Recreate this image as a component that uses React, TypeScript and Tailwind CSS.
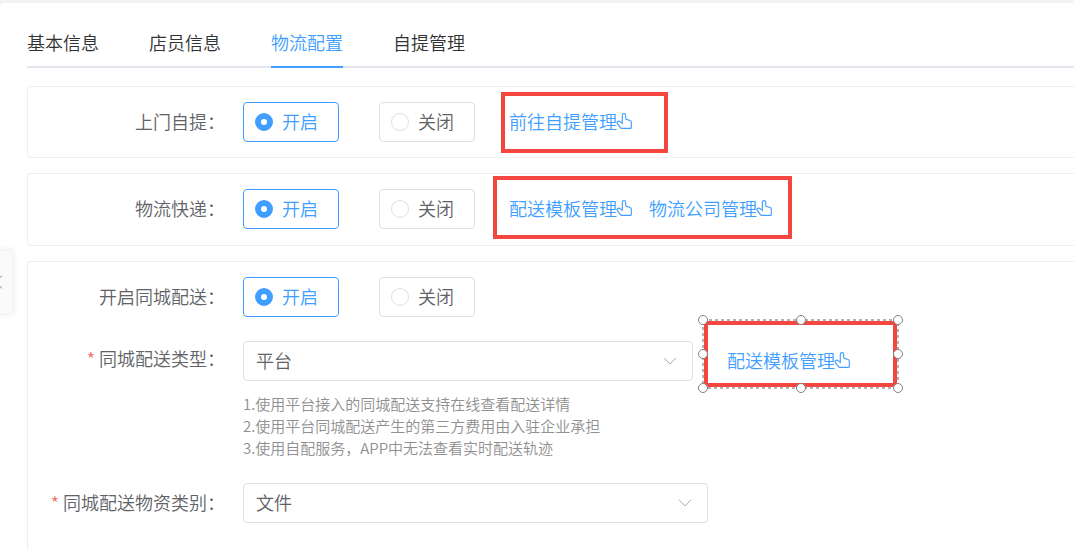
import { useState } from "react";
import type { ReactNode } from "react";

const TABS = ["基本信息", "店员信息", "物流配置", "自提管理"];

const TIPS = [
  "1.使用平台接入的同城配送支持在线查看配送详情",
  "2.使用平台同城配送产生的第三方费用由入驻企业承担",
  "3.使用自配服务，APP中无法查看实时配送轨迹",
];

function PointerIcon() {
  return (
    <svg viewBox="0 0 1024 1024" className="-ml-0.5 size-[18px] shrink-0" fill="currentColor" aria-hidden="true">
      <path d="M511.552 128c-35.584 0-64.384 28.8-64.384 64.448v516.48L274.048 570.88a94.272 94.272 0 0 0-112.896-3.456 44.416 44.416 0 0 0-8.96 62.208L332.8 870.4A64 64 0 0 0 384 896h512V575.232a64 64 0 0 0-45.632-61.312l-205.952-61.76A96 96 0 0 1 576 360.192V192.448C576 156.8 547.2 128 511.552 128zM359.04 556.8l24.128 19.2V192.448a128.448 128.448 0 1 1 256.832 0v167.744a32 32 0 0 0 22.784 30.656l206.016 61.76A128 128 0 0 1 960 575.232V896a64 64 0 0 1-64 64H384a128 128 0 0 1-102.4-51.2L101.056 668.032A108.416 108.416 0 0 1 128 512.512a158.272 158.272 0 0 1 185.984 8.32L359.04 556.8z" />
    </svg>
  );
}

function TextLink({ children }: { children: ReactNode }) {
  return (
    <a href="#" className="flex h-10 items-center whitespace-nowrap pb-0.5 text-[#409eff]">
      {children}
      <PointerIcon />
    </a>
  );
}

function SwitchRow({ label, name, children }: { label: string; name: string; children?: ReactNode }) {
  const [value, setValue] = useState("on");

  return (
    <div className="flex items-start">
      <div id={name} className="mr-[18px] w-[197px] shrink-0 text-right leading-[38px]">
        {label}：
      </div>
      <div role="radiogroup" aria-labelledby={name} className="flex shrink-0 gap-10">
        {[
          { id: "on", text: "开启" },
          { id: "off", text: "关闭" },
        ].map((o) => (
          <label
            key={o.id}
            className="flex h-10 w-24 cursor-pointer items-center gap-[9px] rounded border border-[#dcdfe6] pl-[11px] has-checked:border-[#409eff] has-checked:text-[#409eff]"
          >
            <input
              type="radio"
              name={name}
              checked={value === o.id}
              onChange={() => setValue(o.id)}
              className="size-[18px] shrink-0 appearance-none rounded-full border border-[#dcdfe6] bg-white checked:border-[6px] checked:border-[#409eff]"
            />
            <span className="pb-0.5">{o.text}</span>
          </label>
        ))}
      </div>
      {children}
    </div>
  );
}

function SelectBox({ id, options, className }: { id: string; options: string[]; className: string }) {
  return (
    <div className={`relative ${className}`}>
      <select
        id={id}
        className="h-10 w-full appearance-none rounded border border-[#dcdfe6] bg-white pr-10 pb-0.5 pl-3 text-[#606266] outline-none focus:border-[#409eff]"
      >
        {options.map((o) => (
          <option key={o}>{o}</option>
        ))}
      </select>
      <svg
        viewBox="0 0 14 8"
        className="pointer-events-none absolute top-4 right-4 h-2 w-3.5"
        fill="none"
        stroke="#a8abb2"
        aria-hidden="true"
      >
        <path d="M1 .8 7 7 13 .8" />
      </svg>
    </div>
  );
}

// Marker frame in its selected state, with the eight resize handles.
function SelectedFrame() {
  const dot = "absolute size-[10px] -translate-x-1/2 -translate-y-1/2 rounded-full border border-[#808080] bg-white";
  return (
    <div className="pointer-events-none absolute -top-5 -right-[46px] -bottom-1.5 -left-[23px]">
      <div className="absolute inset-0 rounded-sm border-4 border-[#f44740]" />
      <svg className="absolute -inset-0.5 size-[calc(100%+4px)]" fill="none" aria-hidden="true">
        <rect
          x="1"
          y="1"
          className="h-[calc(100%-2px)] w-[calc(100%-2px)]"
          stroke="#b3b3b3"
          strokeWidth="2"
          strokeDasharray="3 3"
        />
      </svg>
      <div className="absolute -inset-px">
        <span className={`${dot} top-0 left-0`} />
        <span className={`${dot} top-0 left-1/2`} />
        <span className={`${dot} top-0 left-full`} />
        <span className={`${dot} top-1/2 left-0`} />
        <span className={`${dot} top-1/2 left-full`} />
        <span className={`${dot} top-full left-0`} />
        <span className={`${dot} top-full left-1/2`} />
        <span className={`${dot} top-full left-full`} />
      </div>
    </div>
  );
}

export default function App() {
  const [tab, setTab] = useState("物流配置");

  return (
    <div className="relative flex min-h-screen flex-col overflow-hidden bg-[#f0f2f5] pt-[3px] font-['Noto_Sans_CJK_SC',sans-serif] text-lg font-[350] text-[#606266]">
      <main className="flex flex-1 flex-col rounded-tl bg-white pt-4 pl-[27px]">
        <nav className="flex gap-[50px] border-b-2 border-[#e4e7ed]">
          {TABS.map((t) => (
            <button
              key={t}
              type="button"
              onClick={() => setTab(t)}
              className={
                t === tab
                  ? "-mb-0.5 h-[49px] border-b-2 border-[#409eff] pb-0.5 text-[#409eff]"
                  : "-mb-0.5 h-[49px] border-b-2 border-transparent pb-0.5 text-[#303133]"
              }
            >
              {t}
            </button>
          ))}
        </nav>

        <div className="mt-[18px] flex flex-1 flex-col gap-[15px]">
          <section className="rounded-l border border-r-0 border-[#ebeef5] py-[15px]">
            <SwitchRow label="上门自提" name="pickup">
              <div className="relative ml-[34px]">
                <TextLink>前往自提管理</TextLink>
                <div className="pointer-events-none absolute -top-2.5 -right-[35px] -bottom-[11px] -left-2 border-4 border-[#f44740]" />
              </div>
            </SwitchRow>
          </section>

          <section className="rounded-l border border-r-0 border-[#ebeef5] pt-[15px] pb-4">
            <SwitchRow label="物流快递" name="express">
              <div className="relative ml-[34px] flex gap-4">
                <TextLink>配送模板管理</TextLink>
                <TextLink>物流公司管理</TextLink>
                <div className="pointer-events-none absolute -top-[13px] -right-[19px] -bottom-2.5 -left-4 border-4 border-[#f44740]" />
              </div>
            </SwitchRow>
          </section>

          <section className="flex flex-1 flex-col gap-6 rounded-tl border-t border-l border-[#ebeef5] pt-[15px] pb-6">
            <SwitchRow label="开启同城配送" name="city" />

            <div className="flex items-start">
              <label htmlFor="city-type" className="mr-[18px] w-[197px] shrink-0 text-right leading-[34px]">
                <span className="mr-1 text-[#f56c6c]">*</span>
                同城配送类型：
              </label>
              <div>
                <div className="flex items-start">
                  <SelectBox id="city-type" options={["平台", "自配"]} className="w-[450px]" />
                  <div className="relative ml-[34px]">
                    <TextLink>配送模板管理</TextLink>
                    <SelectedFrame />
                  </div>
                </div>
                <div className="mt-3 text-[15px] leading-[22px] text-[#909090]">
                  {TIPS.map((t) => (
                    <p key={t}>{t}</p>
                  ))}
                </div>
              </div>
            </div>

            <div className="flex items-start">
              <label htmlFor="goods-type" className="mr-[18px] w-[197px] shrink-0 text-right leading-[38px]">
                <span className="mr-1 text-[#f56c6c]">*</span>
                同城配送物资类别：
              </label>
              <SelectBox id="goods-type" options={["文件", "食品", "其他"]} className="w-[465px]" />
            </div>
          </section>
        </div>
      </main>

      {/* collapsed side menu handle */}
      <button
        type="button"
        aria-label="收起菜单"
        className="absolute top-[251px] left-0 h-[62px] w-3 rounded-r bg-[#fafafa] shadow-[0_0_6px_2px_rgba(0,0,0,0.08)]"
      >
        <svg viewBox="0 0 4 16" className="h-4 w-1" fill="none" stroke="#909399" aria-hidden="true">
          <path d="M2 1.5-4 8 2 14.5" />
        </svg>
      </button>
    </div>
  );
}
